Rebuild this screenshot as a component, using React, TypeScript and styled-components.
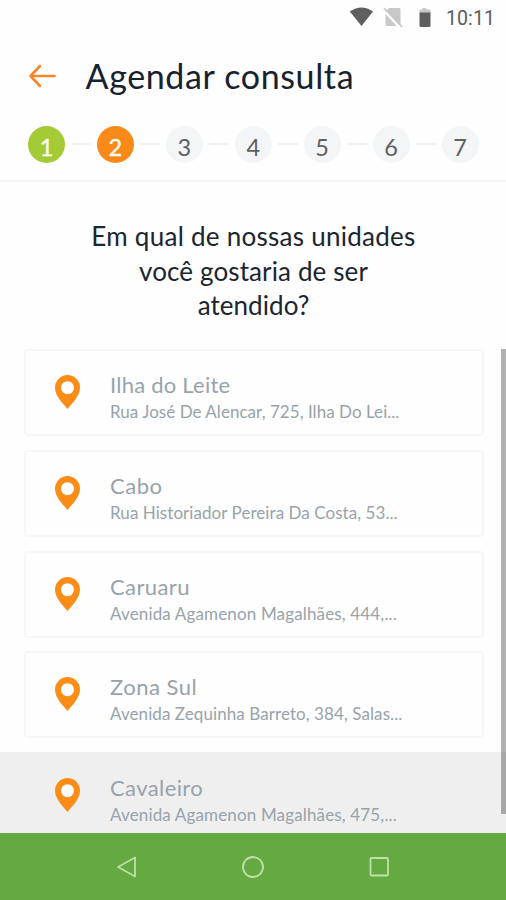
import React from "react";
import styled, { createGlobalStyle } from "styled-components";

const GlobalStyle = createGlobalStyle`
  * { box-sizing: border-box; }
  body { margin: 0; background: #fff; font-family: Lato, "Open Sans", sans-serif; }
`;

const Screen = styled.div`
  width: 506px;
  height: 900px;
  display: flex;
  flex-direction: column;
  overflow: hidden;
  background: #fefefe;
`;

const StatusBar = styled.div`
  height: 36px;
  flex: none;
  display: flex;
  justify-content: flex-end;
  align-items: center;
  padding-right: 11px;
`;

const StatusIcons = styled.svg`
  width: 88px;
  height: 36px;
  margin-right: 8px;
`;

const Clock = styled.span`
  width: 49px;
  white-space: nowrap;
  padding-top: 2px;
  font: 400 19.5px/36px Roboto, sans-serif;
  letter-spacing: 0.1px;
  color: #5c5c5c;
`;

const Header = styled.header`
  height: 81px;
  flex: none;
  display: flex;
  align-items: center;
  padding-left: 28px;
`;

const BackIcon = styled.svg`
  width: 30px;
  height: 26px;
  margin: -1px 27.5px 0 0;
  fill: none;
  stroke: #f6872b;
  stroke-width: 2.6;
  stroke-linecap: round;
  stroke-linejoin: round;
`;

const Title = styled.h1`
  margin: -2px 0 0;
  font-size: 34px;
  line-height: 44px;
  font-weight: 400;
  letter-spacing: 0.63px;
  color: #17212f;
  white-space: nowrap;
`;

const Stepper = styled.nav`
  height: 65px;
  flex: none;
  display: flex;
  align-items: flex-start;
  padding: 8.5px 27.5px 0 28px;
  border-bottom: 2px solid #f5f5f5;
`;

const Step = styled.div<{ $state: "done" | "current" | "todo" }>`
  width: 37px;
  height: 37px;
  flex: none;
  border-radius: 50%;
  padding-top: 3px;
  text-align: center;
  font-size: 23.5px;
  line-height: 36px;
  background: ${(p) => ({ done: "#a4cb35", current: "#f98a19", todo: "#f3f5f6" })[p.$state]};
  color: ${(p) => (p.$state === "todo" ? "#5e6164" : "#fbfbef")};
  -webkit-text-stroke: ${(p) => (p.$state === "todo" ? "0" : "0.4px #fbfbef")};
`;

const StepLine = styled.div`
  flex: 1;
  height: 2px;
  margin: 17px 5.5px 0 6.5px;
  background: #f1f1f1;
`;

const Question = styled.h2`
  height: 167px;
  flex: none;
  margin: 0;
  padding: 37px 0 0 1px;
  text-align: center;
  font-size: 26px;
  line-height: 34.5px;
  font-weight: 400;
  color: #1b2531;
`;

const QuestionLine = styled.span<{ $tracking: number }>`
  display: block;
  letter-spacing: ${(p) => p.$tracking}px;
`;

const ListArea = styled.main`
  height: 484px;
  flex: none;
  display: flex;
  overflow: hidden;
`;

const UnitList = styled.div`
  width: 501px;
  flex: none;
`;

const UnitRow = styled.div<{ $pressed?: boolean }>`
  height: 100.8px;
  width: 506px;
  padding: 0 22px 0 24px;
  background: ${(p) => (p.$pressed ? "#efefef" : "transparent")};
`;

const UnitCard = styled.div<{ $pressed?: boolean }>`
  height: 87px;
  display: flex;
  align-items: flex-start;
  border: 2px solid ${(p) => (p.$pressed ? "transparent" : "#f6f7f7")};
  border-radius: 4px;
  padding: 24px 0 0 29px;
`;

const PinIcon = styled.svg`
  width: 25px;
  height: 34px;
  margin-right: 30px;
  flex: none;
`;

const UnitText = styled.div`
  display: flex;
  flex-direction: column;
  white-space: nowrap;
  color: #97a3aa;
`;

const UnitName = styled.span<{ $tracking: number }>`
  font-size: 22px;
  line-height: 27px;
  margin-top: -4px;
  letter-spacing: ${(p) => p.$tracking}px;
`;

const UnitAddress = styled.span<{ $tracking: number }>`
  font-size: 17px;
  line-height: 28px;
  letter-spacing: ${(p) => p.$tracking}px;
`;

const ScrollThumb = styled.div`
  width: 5px;
  height: 465px;
  flex: none;
  z-index: 1;
  background: rgba(0, 0, 0, 0.3);
`;

const NavBar = styled.footer`
  height: 67px;
  flex: none;
  display: flex;
  justify-content: center;
  gap: 102px;
  padding-top: 22px;
  background: #65aa41;
`;

const NavIcon = styled.svg`
  width: 24px;
  height: 24px;
  fill: none;
  stroke: #bce0a8;
  stroke-width: 1.8;
  stroke-linejoin: round;
`;

const steps = [1, 2, 3, 4, 5, 6, 7];

const units = [
  { name: "Ilha do Leite", nt: 0.24, address: "Rua José De Alencar, 725, Ilha Do Lei...", at: 0.04 },
  { name: "Cabo", nt: 0.55, address: "Rua Historiador Pereira Da Costa, 53...", at: 0.06 },
  { name: "Caruaru", nt: 0.4, address: "Avenida Agamenon Magalhães, 444,...", at: 0.15 },
  { name: "Zona Sul", nt: 0.5, address: "Avenida Zequinha Barreto, 384, Salas...", at: 0.08 },
  { name: "Cavaleiro", nt: 0.4, address: "Avenida Agamenon Magalhães, 475,...", at: 0.15, pressed: true },
];

const stateOf = (n: number) => (n === 1 ? "done" : n === 2 ? "current" : "todo");

export default function App() {
  return (
    <Screen>
      <GlobalStyle />
      <StatusBar>
        <StatusIcons viewBox="0 0 88 36">
          <path d="M11.500 26 -.2 11.500Q11.500 3.500 23 11.500Z" fill="#5f5f5f" />
          <path d="M39 8h10q1.500 0 1.500 1.500v15q0 1.500-1.500 1.500H37q-1.500 0-1.500-1.500V12z" fill="#c8c8c8" />
          <path d="M33.500 9.500 50.500 28" stroke="#fefefe" strokeWidth="3" />
          <path d="m34 8 18 19" stroke="#c8c8c8" strokeWidth="1.700" />
          <path d="M69.500 12V9.500h3V8h4v1.500h4V13h-11z" fill="#c8c8c8" />
          <path d="M69.500 12.500h11v13q0 1.500-1.500 1.500h-8q-1.500 0-1.500-1.500z" fill="#5f5f5f" />
        </StatusIcons>
        <Clock>10:11</Clock>
      </StatusBar>
      <Header>
        <BackIcon viewBox="0 0 30 26">
          <path d="M26.500 13H2.500M12 3 2.500 13l9.500 10" />
        </BackIcon>
        <Title>Agendar consulta</Title>
      </Header>
      <Stepper>
        {steps.map((n) => (
          <React.Fragment key={n}>
            {n > 1 && <StepLine />}
            <Step $state={stateOf(n)}>{n}</Step>
          </React.Fragment>
        ))}
      </Stepper>
      <Question>
        <QuestionLine $tracking={0.27}>Em qual de nossas unidades</QuestionLine>
        <QuestionLine $tracking={0.12}>você gostaria de ser</QuestionLine>
        <QuestionLine $tracking={0.05}>atendido?</QuestionLine>
      </Question>
      <ListArea>
        <UnitList>
          {units.map((u) => (
            <UnitRow key={u.name} $pressed={u.pressed}>
              <UnitCard $pressed={u.pressed}>
                <PinIcon viewBox="0 0 25 34">
                  <path
                    fill="#fa8c18"
                    d="M12.500 0A12.500 12.500 0 0 0 0 12.500C0 21 8 28.500 12.500 34 17 28.500 25 21 25 12.500A12.500 12.500 0 0 0 12.500 0Z"
                  />
                  <circle cx="12.500" cy="12.700" r="6.500" fill="#fefefe" />
                </PinIcon>
                <UnitText>
                  <UnitName $tracking={u.nt}>{u.name}</UnitName>
                  <UnitAddress $tracking={u.at}>{u.address}</UnitAddress>
                </UnitText>
              </UnitCard>
            </UnitRow>
          ))}
        </UnitList>
        <ScrollThumb />
      </ListArea>
      <NavBar>
        <NavIcon viewBox="0 0 24 24"><path d="M20 2.500v19L3 12z" /></NavIcon>
        <NavIcon viewBox="0 0 24 24"><circle cx="12" cy="12" r="10" /></NavIcon>
        <NavIcon viewBox="0 0 24 24"><rect x="3.500" y="3" width="17.500" height="17.500" rx="1" /></NavIcon>
      </NavBar>
    </Screen>
  );
}
